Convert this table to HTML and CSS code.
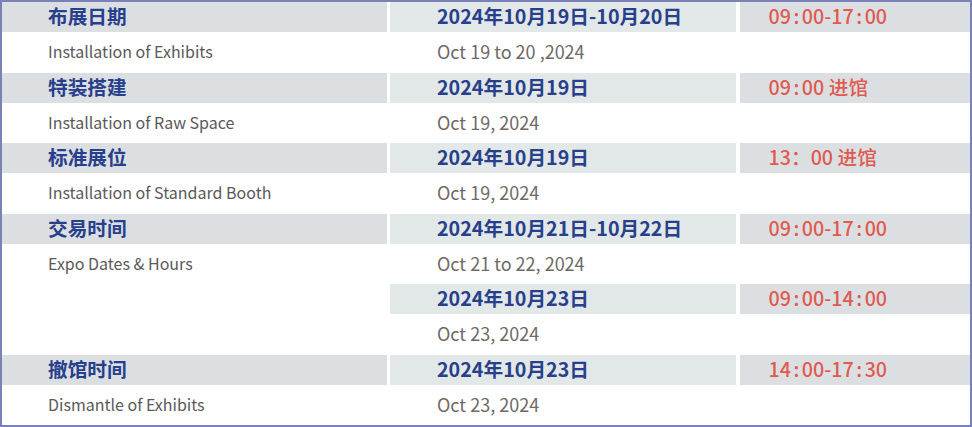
FILE: index.html
```html
<!DOCTYPE html>
<html lang="zh">
<head>
<meta charset="utf-8">
<link rel="stylesheet" href="styles.css">
</head>
<body>
<div class="schedule">
  <div class="cell name head">布展日期</div>
  <div class="cell date head">2024年10月19日-10月20日</div>
  <div class="cell time head">09<span class="colon">:</span>00-17<span class="colon">:</span>00</div>
  <div class="cell name sub">Installation of Exhibits</div>
  <div class="cell date sub">Oct 19 to 20 ,2024</div>
  <div class="cell time sub"></div>

  <div class="cell name head">特装搭建</div>
  <div class="cell date head">2024年10月19日</div>
  <div class="cell time head">09<span class="colon">:</span>00 进馆</div>
  <div class="cell name sub">Installation of Raw Space</div>
  <div class="cell date sub">Oct 19, 2024</div>
  <div class="cell time sub"></div>

  <div class="cell name head">标准展位</div>
  <div class="cell date head">2024年10月19日</div>
  <div class="cell time head">13：00 进馆</div>
  <div class="cell name sub">Installation of Standard Booth</div>
  <div class="cell date sub">Oct 19, 2024</div>
  <div class="cell time sub"></div>

  <div class="cell name head">交易时间</div>
  <div class="cell date head">2024年10月21日-10月22日</div>
  <div class="cell time head">09<span class="colon">:</span>00-17<span class="colon">:</span>00</div>
  <div class="cell name sub">Expo Dates &amp; Hours</div>
  <div class="cell date sub">Oct 21 to 22, 2024</div>
  <div class="cell time sub"></div>

  <div class="cell name blank"></div>
  <div class="cell date head">2024年10月23日</div>
  <div class="cell time head">09<span class="colon">:</span>00-14<span class="colon">:</span>00</div>
  <div class="cell name sub"></div>
  <div class="cell date sub">Oct 23, 2024</div>
  <div class="cell time sub"></div>

  <div class="cell name head">撤馆时间</div>
  <div class="cell date head">2024年10月23日</div>
  <div class="cell time head">14<span class="colon">:</span>00-17<span class="colon">:</span>30</div>
  <div class="cell name sub">Dismantle of Exhibits</div>
  <div class="cell date sub">Oct 23, 2024</div>
  <div class="cell time sub"></div>
</div>
</body>
</html>
```
FILE: styles.css
```css
html, body {
  margin: 0;
  padding: 0;
  background: #ffffff;
}

body {
  font-family: "Noto Sans CJK SC", "Noto Sans", sans-serif;
}

.schedule {
  width: 972px;
  height: 427px;
  box-sizing: border-box;
  border: 2px solid #7a80b8;
  display: grid;
  grid-template-columns: 384.5px 346px 1fr;
  grid-template-rows: repeat(6, 30px 40.5px);
  column-gap: 3.5px;
}

.cell {
  display: flex;
  align-items: center;
  white-space: nowrap;
}

.name { padding-left: 46px; }
.date { padding-left: 47px; }
.time { padding-left: 29px; }

.head.name, .head.time { background: #dcdfe2; }
.head.date { background: #e1e8e7; }

.head {
  font-size: 19.7px;
  line-height: 1;
  padding-bottom: 2px;
}

.name.head, .date.head {
  font-weight: 700;
  color: #28408c;
}

.time.head {
  color: #e05a50;
  font-weight: 500;
}

.colon {
  padding: 0 2.5px;
}

.sub {
  font-size: 16px;
  padding-bottom: 2px;
}

.name.sub { color: #595959; }
.date.sub {
  color: #6e6a66;
  font-size: 18px;
}

.blank { background: transparent; }
```
